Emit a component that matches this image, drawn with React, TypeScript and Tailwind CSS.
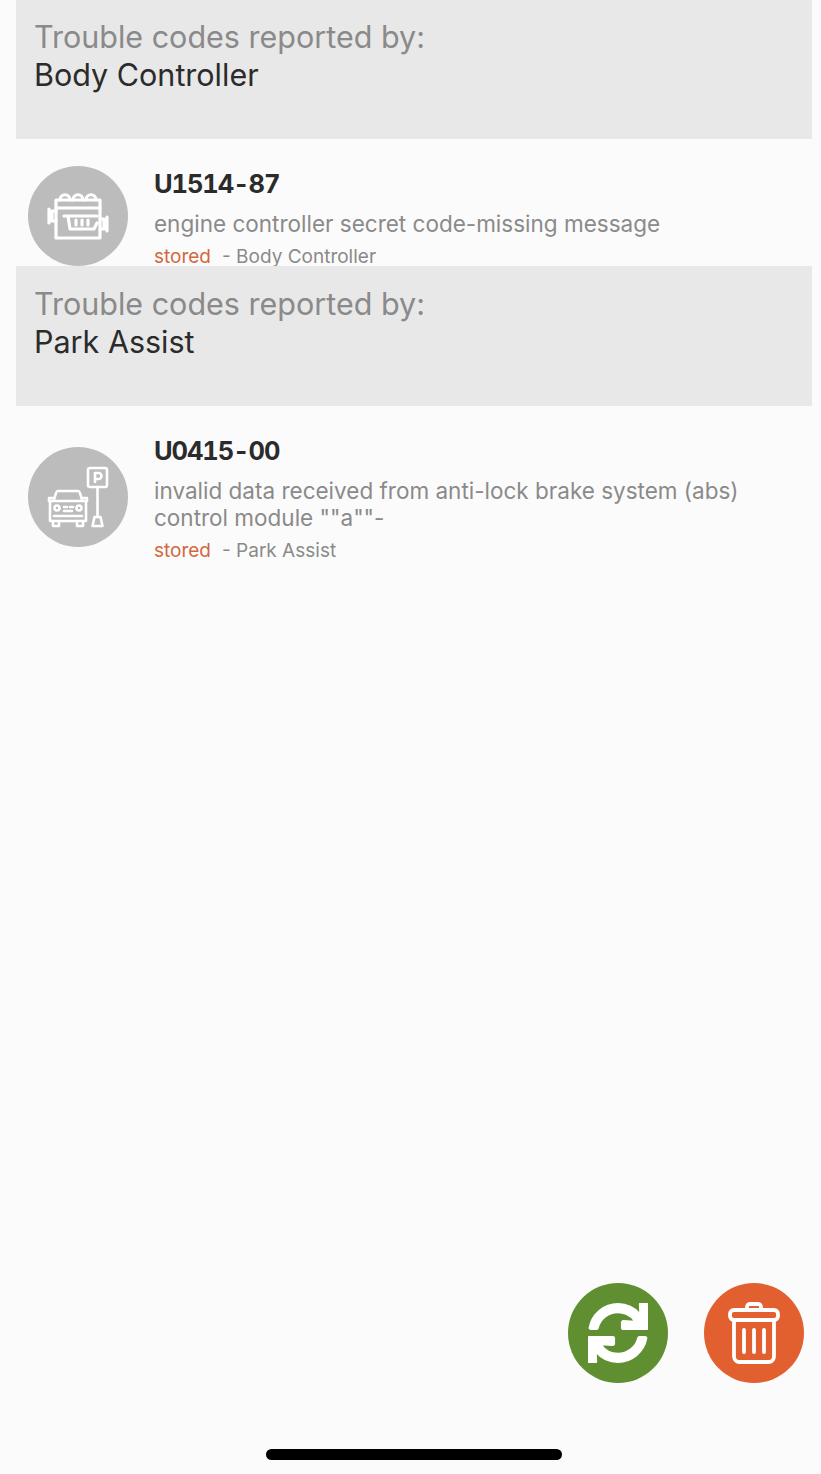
import { FaSync } from "react-icons/fa";

function EngineIcon() {
  return (
    <svg width="62" height="50" viewBox="0 0 62 50" fill="none" stroke="#fff" strokeWidth="3.200" strokeLinejoin="round" strokeLinecap="round">
      <path d="M9 9h44v38H9z" />
      <path d="M9 17h44" />
      <path d="M13 9c0-7 10-7 10 0M26 9c0-7 10-7 10 0M39 9c0-7 10-7 10 0" />
      <path d="M9 20H5v10h4M2 18v14" />
      <path d="M53 28h4v10h-4M60 26v14" />
      <path d="M17 25h33M21 25l2 13h24l3-6" />
      <path d="M29 29v5M35 29v5M41 29v5" />
    </svg>
  );
}

function ParkIcon() {
  return (
    <svg width="62" height="62" viewBox="0 0 62 62" fill="none" stroke="#fff" strokeWidth="2.600" strokeLinejoin="round" strokeLinecap="round">
      <rect x="41" y="2" width="19" height="19" rx="2" />
      <path d="M48 16V7h3.500a3 3 0 0 1 0 6H48" />
      <path d="M50.500 21v30" />
      <path d="M45.500 60l2-9h6l2 9z" />
      <path d="M7 34l2-7c.3-1 1-2 2-2h20c1 0 1.700 1 2 2l2 7" />
      <path d="M2 35h38M2 35v-3h5M35 32h5v3" />
      <path d="M3 35v20h36V35" />
      <path d="M6 55v5h6v-5M30 55v5h6v-5" />
      <circle cx="10" cy="42" r="2.500" />
      <circle cx="32" cy="42" r="2.500" />
      <path d="M17 41h3M23 41h3M17 45h8M7 50h28" />
    </svg>
  );
}

function TrashIcon() {
  return (
    <svg width="52" height="62" viewBox="0 0 52 62" fill="none" stroke="#fff" strokeWidth="3.800" strokeLinejoin="round" strokeLinecap="round">
      <path d="M19 8V5c0-1.500 1-3 2.500-3h9C32 2 33 3.500 33 5v3" />
      <rect x="2" y="8" width="48" height="10" rx="4" />
      <path d="M6 18v36c0 3 2 6 5 6h30c3 0 5-3 5-6V18" />
      <path d="M16 28v22M26 28v22M36 28v22" />
    </svg>
  );
}

function SectionHeader({ name }: { name: string }) {
  return (
    <div className="mr-[9px] ml-4 h-[140px] shrink-0 bg-[#e8e8e8] pt-[19px] text-[30.500px] leading-[38px]">
      <div className="px-[18px] text-[#8a8a8a]">Trouble codes reported by:</div>
      <div className="px-[18px] text-[#2b2b2b]">{name}</div>
    </div>
  );
}

function CodeRow({
  code,
  description,
  source,
  icon,
  className,
  iconClassName,
}: {
  code: string;
  description: string[];
  source: string;
  icon: React.ReactNode;
  className: string;
  iconClassName: string;
}) {
  return (
    <div className={`flex shrink-0 overflow-hidden pl-7 ${className}`}>
      <div className={`flex h-[100px] w-[100px] shrink-0 items-center justify-center rounded-full bg-[#bcbcbc] ${iconClassName}`}>
        {icon}
      </div>
      <div className="ml-[26px] min-w-0 flex-1 pt-[28px]">
        <div className="text-[25.500px] leading-[34px] font-bold tracking-[-1.100px] text-[#2b2b2b] tabular-nums">{code}</div>
        <div className="mt-[9px] text-[22.500px] leading-[27px] text-[#8a8a8a]">
          {description.map((line) => (
            <div key={line}>{line}</div>
          ))}
        </div>
        <div className="mt-[11px] flex text-[19px] leading-[18px] text-[#8a8a8a]">
          <span className="text-[#d2683f]">stored</span>
          <span className="ml-[11px]">- {source}</span>
        </div>
      </div>
    </div>
  );
}

export default function App() {
  return (
    <div className="flex h-[1474px] flex-col overflow-hidden bg-[#fbfbfb] font-['Inter','Liberation_Sans',sans-serif]">
      <div className="-mt-px">
        <SectionHeader name="Body Controller" />
      </div>
      <CodeRow
        code="U1514-87"
        description={["engine controller secret code-missing message"]}
        source="Body Controller"
        icon={<EngineIcon />}
        className="h-[127px]"
        iconClassName="mt-[27px]"
      />
      <SectionHeader name="Park Assist" />
      <CodeRow
        code="U0415-00"
        description={[
          "invalid data received from anti-lock brake system (abs)",
          "control module \"\"a\"\"-",
        ]}
        source="Park Assist"
        icon={<ParkIcon />}
        className="pb-4"
        iconClassName="mt-[41px]"
      />
      <div className="flex-1" />
      <div className="flex justify-end gap-9 pr-[17px]">
        <button className="flex h-[100px] w-[100px] items-center justify-center rounded-full bg-[#5f8f30] text-[60px] text-white">
          <FaSync stroke="currentColor" strokeWidth={14} />
        </button>
        <button className="flex h-[100px] w-[100px] items-center justify-center rounded-full bg-[#e2602f]">
          <TrashIcon />
        </button>
      </div>
      <div className="mt-[66px] mb-[14px] flex justify-center pl-[7px]">
        <div className="h-[11px] w-[296px] rounded-full bg-black" />
      </div>
    </div>
  );
}
